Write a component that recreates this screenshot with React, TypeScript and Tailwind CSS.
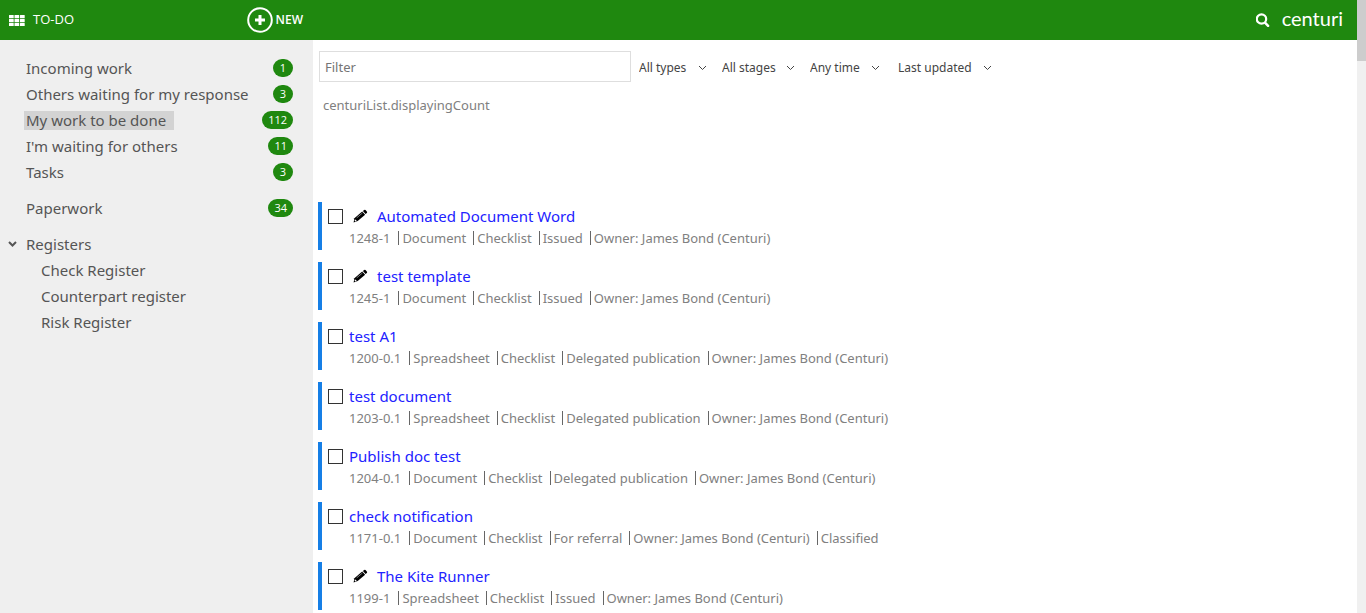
import { useState } from "react";

type WorkLink = { label: string; count: number };
type Item = { title: string; locked?: boolean; meta: string[] };

const owner = "Owner: James Bond (Centuri)";

const workLinks: WorkLink[] = [
  { label: "Incoming work", count: 1 },
  { label: "Others waiting for my response", count: 3 },
  { label: "My work to be done", count: 112 },
  { label: "I'm waiting for others", count: 11 },
  { label: "Tasks", count: 3 },
];

const registers = ["Check Register", "Counterpart register", "Risk Register"];

const items: Item[] = [
  { title: "Automated Document Word", locked: true, meta: ["1248-1", "Document", "Checklist", "Issued", owner] },
  { title: "test template", locked: true, meta: ["1245-1", "Document", "Checklist", "Issued", owner] },
  { title: "test A1", meta: ["1200-0.1", "Spreadsheet", "Checklist", "Delegated publication", owner] },
  { title: "test document", meta: ["1203-0.1", "Spreadsheet", "Checklist", "Delegated publication", owner] },
  { title: "Publish doc test", meta: ["1204-0.1", "Document", "Checklist", "Delegated publication", owner] },
  { title: "check notification", meta: ["1171-0.1", "Document", "Checklist", "For referral", owner, "Classified"] },
  { title: "The Kite Runner", locked: true, meta: ["1199-1", "Spreadsheet", "Checklist", "Issued", owner] },
];

const filters = [
  { label: "All types", width: "w-[83px]" },
  { label: "All stages", width: "w-[88px]" },
  { label: "Any time", width: "w-[88px]", chevron: "mr-[18px]" },
  { label: "Last updated", width: "w-[109px]" },
];

function Chevron({ className }: { className: string }) {
  return (
    <svg viewBox="0 0 9 6" className={className} fill="none" stroke="currentColor" aria-hidden="true">
      <path d="M1 1l3.5 3.5L8 1" />
    </svg>
  );
}

function GridIcon() {
  return (
    <svg viewBox="0 0 16 11" className="h-[11px] w-4" fill="currentColor" aria-hidden="true">
      {[0, 4, 8].map((y) =>
        [0, 5.5, 11].map((x) => <rect key={`${x}-${y}`} x={x} y={y} width="4.7" height="3.2" rx="0.3" />),
      )}
    </svg>
  );
}

function Pencil() {
  return (
    <svg viewBox="0 0 15 14" className="h-[14px] w-[15px]" aria-hidden="true">
      <path d="M9.900 1.900l1.300-1q.7-.4 1.300.1l1.500 1.700q.4.700-.2 1.300l-1.200 1.100z" fill="#000" />
      <path d="M9.200 2.400l2.900 3.400-7.400 6.300-4.100 1.300.8-4.200z" fill="#000" />
      <path d="M2 10.200l1.800 1.700-1.500.5-.7-.7z" fill="#fff" />
      <path d="M3.700 8.900l5.700-4.900" stroke="#aaa" strokeWidth="0.700" />
    </svg>
  );
}

function Badge({ count }: { count: number }) {
  return (
    <span className="flex h-[18px] min-w-5 shrink-0 items-center justify-center rounded-full bg-[#1f880f] px-1.5 font-['Open_Sans',sans-serif] text-[11px] text-white">
      {count}
    </span>
  );
}

function Row({ item, index }: { item: Item; index: number }) {
  const id = `item-${index}`;
  return (
    <li className="flex h-12 border-l-4 border-[#167fe6] pl-1.5">
      <input
        id={id}
        type="checkbox"
        aria-label={item.title}
        className="mt-[7px] h-[15px] w-[15px] shrink-0 appearance-none border border-[#333] bg-white checked:bg-[#167fe6]"
      />
      <div className="min-w-0 pl-1.5">
        <div className="flex h-7 items-center">
          {item.locked && (
            <span className="w-7 shrink-0 pl-1">
              <Pencil />
            </span>
          )}
          <a href="#item" className="text-[15px] text-[#2222ff]">
            {item.title}
          </a>
        </div>
        <div className="flex h-4 items-center text-[13px] text-[#808080]">
          {item.meta.map((m, i) => (
            <span
              key={m}
              className={i === 0 ? "pr-2 leading-[14px]" : "border-l border-[#666] pr-[7px] pl-[3px] leading-[14px]"}
            >
              {m}
            </span>
          ))}
        </div>
      </div>
    </li>
  );
}

export default function App() {
  const [active, setActive] = useState("My work to be done");
  return (
    <div className="flex h-screen overflow-hidden bg-white font-['Noto_Sans','Open_Sans',sans-serif]">
      <div className="flex min-w-0 flex-1 flex-col">
        <header className="flex h-10 shrink-0 items-center bg-[#1f880f] font-['Open_Sans',sans-serif] text-white">
          <div className="flex w-[313px] items-center justify-between pr-[10px] pl-[9px]">
            <a href="#todo" className="flex items-center gap-2 text-[13px] font-medium">
              <GridIcon />
              TO-DO
            </a>
            <button type="button" className="flex items-center gap-[3px] text-[12px] font-semibold">
              <svg viewBox="0 0 26 26" className="h-[26px] w-[26px]" fill="none" stroke="currentColor" aria-hidden="true">
                <circle cx="13" cy="13" r="11.800" strokeWidth="2" />
                <path d="M13 8v10M8 13h10" strokeWidth="3" />
              </svg>
              NEW
            </button>
          </div>
          <div className="ml-auto flex items-center gap-3 pr-[14px]">
            <button type="button" aria-label="Search">
              <svg viewBox="0 0 14 14" className="h-[14px] w-[14px]" fill="none" stroke="currentColor" aria-hidden="true">
                <circle cx="5.500" cy="6" r="4.700" strokeWidth="2.200" />
                <path d="M9.200 9.900l2.900 2.900" strokeWidth="2.500" strokeLinecap="round" />
              </svg>
            </button>
            <a href="#home" className="pb-1 font-[Lato,sans-serif] text-xl leading-5">
              centuri
            </a>
          </div>
        </header>
        <div className="flex min-h-0 flex-1">
          <nav className="w-[313px] shrink-0 bg-[#efefef] pt-[15px] text-[15px] text-[#555]">
            {workLinks.map((l) => (
              <div key={l.label} className="flex h-[26px] items-center justify-between pr-5 pl-6">
                <a
                  href="#work"
                  onClick={() => setActive(l.label)}
                  className={l.label === active ? "bg-[#d3d3d3] pr-2 pl-0.5 leading-[19px]" : "pl-0.5 leading-[19px]"}
                >
                  {l.label}
                </a>
                <Badge count={l.count} />
              </div>
            ))}
            <div className="mt-2.5 flex h-[26px] items-center justify-between pr-5 pl-[26px]">
              <a href="#paperwork">Paperwork</a>
              <Badge count={34} />
            </div>
            <button type="button" className="mt-2.5 flex h-[26px] items-center gap-[9px] pl-2">
              <Chevron className="h-1.5 w-[9px] stroke-2" />
              Registers
            </button>
            {registers.map((r) => (
              <a key={r} href="#register" className="flex h-[26px] items-center pl-[41px]">
                {r}
              </a>
            ))}
          </nav>
          <main className="min-w-0 flex-1 pt-[11px] pl-[5px]">
            <div className="flex items-center">
              <input
                aria-label="Filter"
                placeholder="Filter"
                className="ml-px h-[31px] w-[312px] border border-[#dedede] px-[5px] text-[13px] outline-none placeholder:text-[#757575]"
              />
              <div className="flex pt-0.5 pl-2">
                {filters.map((f) => (
                  <label key={f.label} className={`${f.width} flex items-center text-xs text-[#444]`}>
                    <select aria-label={f.label} className="min-w-0 flex-1 appearance-none bg-transparent text-xs outline-none">
                      <option>{f.label}</option>
                    </select>
                    <Chevron className={`${f.chevron ?? "mr-[15px]"} h-1.5 w-[9px] shrink-0`} />
                  </label>
                ))}
              </div>
            </div>
            <p className="mt-[13px] pl-[5px] text-[13px] leading-5 text-[#808080]">centuriList.displayingCount</p>
            <ul className="mt-[87px] flex flex-col gap-3">
              {items.map((item, i) => (
                <Row key={item.title} item={item} index={i} />
              ))}
            </ul>
          </main>
        </div>
      </div>
      <div className="w-[9px] shrink-0 bg-[#f0f0f0]" aria-hidden="true">
        <div className="h-[61px] bg-[#cdcdcd]" />
      </div>
    </div>
  );
}
